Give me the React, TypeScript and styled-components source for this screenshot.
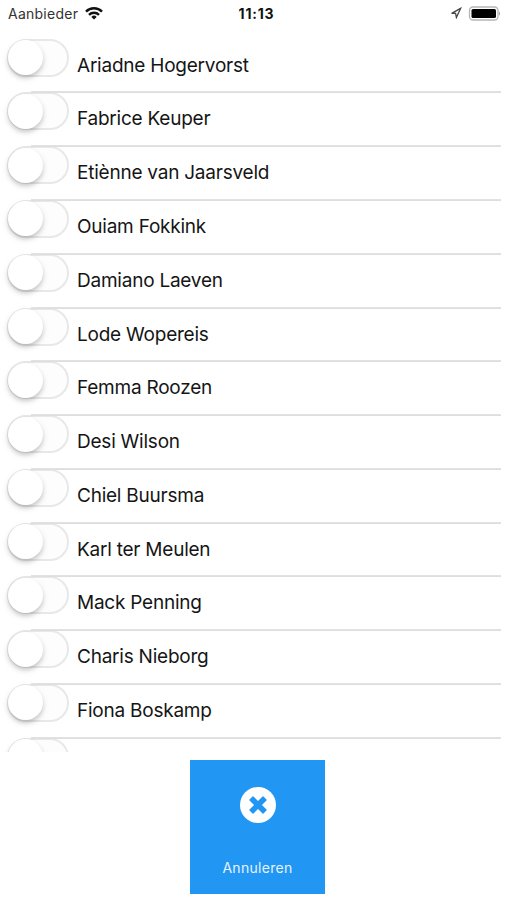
import React from "react";
import styled, { createGlobalStyle } from "styled-components";

const GlobalStyle = createGlobalStyle`
  *, *::before, *::after { box-sizing: border-box; }
  body { margin: 0; background: #fff; font-family: Inter, "Liberation Sans", sans-serif; color: #151515; }
`;

const Screen = styled.div`
  display: flex;
  flex-direction: column;
  width: 507px;
  height: 900px;
  overflow: hidden;
  background: #fff;
`;

const StatusBar = styled.header`
  flex: none;
  display: grid;
  grid-template-columns: 1fr auto 1fr;
  align-items: center;
  height: 26px;
  padding: 0 6px 0 8px;
`;

const Carrier = styled.div`
  display: flex;
  align-items: center;
  gap: 7px;
  font-size: 14px;
  letter-spacing: 0.25px;
  color: #333;
`;

const Clock = styled.time`
  font-size: 14px;
  font-weight: 700;
  letter-spacing: 0.8px;
  margin-left: 4px;
  color: #111;
`;

const Indicators = styled.div`
  display: flex;
  justify-content: flex-end;
  align-items: center;
  gap: 6px;
`;

const List = styled.ul`
  flex: none;
  height: 725.5px;
  margin: 0;
  padding: 12.7px 6px 0 7px;
  overflow: hidden;
  list-style: none;
`;

const Row = styled.li`
  position: relative;
  display: flex;
  align-items: flex-start;
  gap: 8px;
  height: 53.77px;

  & + &::before {
    content: "";
    position: absolute;
    top: -1px;
    left: 24px;
    right: 0;
    height: 2px;
    background: linear-gradient(#e4e4e4, #dcdcdc);
  }
`;

const Toggle = styled.button`
  flex: none;
  display: flex;
  width: 62px;
  height: 38px;
  padding: 0;
  border: 2px solid #e8e8e8;
  border-radius: 19px;
  background: #fdfdfd;
`;

const Knob = styled.span`
  width: 35px;
  height: 35px;
  margin: -0.5px 0 0 -1px;
  border-radius: 50%;
  background: #fff;
  box-shadow: 0 3px 4px rgba(0, 0, 0, 0.17), 0 3px 9px rgba(0, 0, 0, 0.07);
`;

const Name = styled.span`
  font-size: 19px;
  line-height: 54px;
  letter-spacing: -0.23px;
  white-space: nowrap;
`;

const Footer = styled.footer`
  display: flex;
  justify-content: center;
  padding: 8px 0 0 8px;
`;

const CancelButton = styled.button`
  display: flex;
  flex-direction: column;
  align-items: center;
  width: 135px;
  height: 134.5px;
  padding: 27px 0 0;
  border: 0;
  background: #2196f3;
  color: #fff;
  font-family: inherit;
`;

const CancelLabel = styled.span`
  margin-top: 36px;
  font-size: 14px;
  line-height: 18px;
  letter-spacing: 0.3px;
  color: #e5f3ff;
`;

const names = [
  "Ariadne Hogervorst", "Fabrice Keuper", "Etiènne van Jaarsveld", "Ouiam Fokkink",
  "Damiano Laeven", "Lode Wopereis", "Femma Roozen", "Desi Wilson", "Chiel Buursma",
  "Karl ter Meulen", "Mack Penning", "Charis Nieborg", "Fiona Boskamp", "",
];

const WifiIcon = () => (
  <svg width="18" height="13" viewBox="0 0 18 13" fill="none" stroke="#111" strokeWidth="2.4">
    <path d="M1 4.6a11.3 11.3 0 0 1 16 0" />
    <path d="M4 7.8a7 7 0 0 1 10 0" />
    <path d="M9 12.6 6.3 9.9a3.8 3.8 0 0 1 5.4 0Z" fill="#111" stroke="none" />
  </svg>
);

const LocationIcon = () => (
  <svg width="12" height="12" viewBox="0 0 12 12" fill="none" stroke="#444" strokeWidth="1.3" strokeLinejoin="miter">
    <path d="M10.6 1.4 1.6 6.4l4-.1.8 4.2Z" />
  </svg>
);

const BatteryIcon = () => (
  <svg width="33" height="15" viewBox="0 0 33 15">
    <rect x="1.5" y="1" width="28.5" height="13" rx="3.5" fill="#fff" stroke="#b5b5b5" strokeWidth="1.3" />
    <rect x="3.5" y="3" width="24.5" height="9" rx="1.6" fill="#000" />
    <path d="M31 5.2q2 2.3 0 4.6Z" fill="#999" />
  </svg>
);

const CloseCircleIcon = () => (
  <svg width="36" height="36" viewBox="0 0 36 36">
    <circle cx="18" cy="18" r="18" fill="#fff" />
    <path
      d="m13 10 5 5 5-5 3 3-5 5 5 5-3 3-5-5-5 5-3-3 5-5-5-5Z"
      fill="#2196f3"
      stroke="#2196f3"
      strokeWidth="1.4"
      strokeLinejoin="round"
    />
  </svg>
);

export default function App() {
  return (
    <Screen>
      <GlobalStyle />
      <StatusBar>
        <Carrier>Aanbieder <WifiIcon /></Carrier>
        <Clock>11:13</Clock>
        <Indicators><LocationIcon /><BatteryIcon /></Indicators>
      </StatusBar>
      <List>
        {names.map((name, i) => (
          <Row key={i}>
            <Toggle type="button" role="switch" aria-checked={false}><Knob /></Toggle>
            <Name>{name}</Name>
          </Row>
        ))}
      </List>
      <Footer>
        <CancelButton type="button">
          <CloseCircleIcon />
          <CancelLabel>Annuleren</CancelLabel>
        </CancelButton>
      </Footer>
    </Screen>
  );
}
